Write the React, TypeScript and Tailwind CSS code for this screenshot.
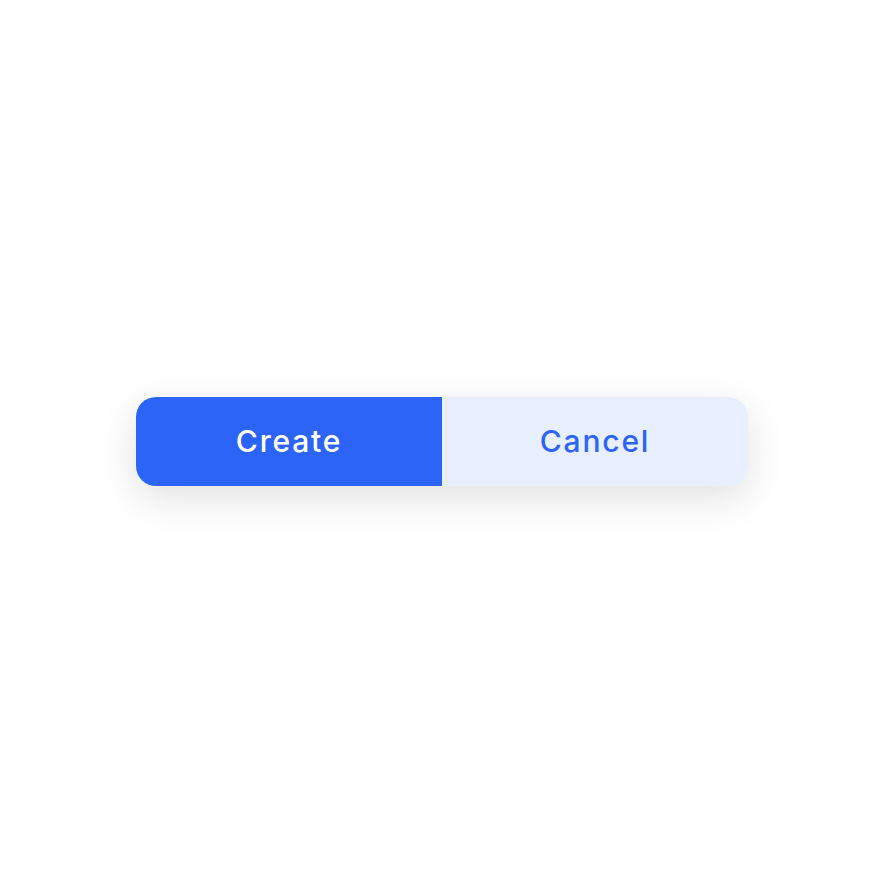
export default function App() {
  return (
    <div className="flex h-[884px] w-full items-center justify-center bg-white font-['Inter',sans-serif]">
      <div className="mb-[2px] flex h-[89px] w-[612px] overflow-hidden rounded-[20px] shadow-[0_12px_40px_rgba(0,0,0,0.12)]">
        <button className="flex flex-1 items-center justify-center bg-[#2d64f8] text-[30px] font-medium tracking-[0.06em] text-white">
          Create
        </button>
        <button className="flex flex-1 items-center justify-center bg-[#e8efff] text-[30px] font-medium tracking-[0.06em] text-[#2d64f8]">
          Cancel
        </button>
      </div>
    </div>
  );
}
